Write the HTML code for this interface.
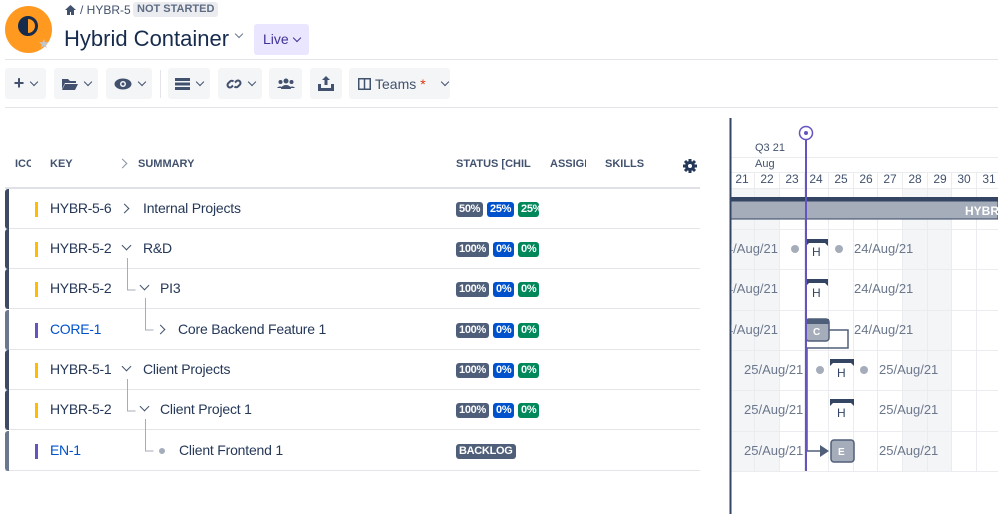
<!DOCTYPE html>
<html><head><style>
*{margin:0;padding:0;box-sizing:border-box}
body{width:998px;height:514px;overflow:hidden;background:#fff;font-family:"Liberation Sans",sans-serif;color:#172b4d;position:relative}
.a{position:absolute}
.btn{position:absolute;top:68px;height:31px;background:#f4f5f7;border-radius:3px;display:flex;align-items:center;justify-content:center;gap:4px;color:#42526e;font-size:14px}
.chev{display:inline-block;width:6px;height:6px;border-right:1.6px solid #42526e;border-bottom:1.6px solid #42526e;transform:rotate(45deg);margin-top:-4px;margin-left:3px}
.hd{position:absolute;top:158px;font-size:11px;font-weight:bold;color:#42526e;overflow:hidden;white-space:nowrap}
.row{position:absolute;left:5px;width:695px;height:40px;border-bottom:1px solid #e4e5e9}
.lb{position:absolute;left:0;top:0;width:4px;height:40px;background:#3e4a63;border-radius:3px 0 0 3px}
.key{position:absolute;left:45px;top:11px;font-size:14px;color:#253858;letter-spacing:-0.3px}
.tick{position:absolute;left:30px;top:13px;width:3px;height:15px;background:#ffbc00}
.sum{position:absolute;top:11px;font-size:14px;color:#253858;letter-spacing:-0.2px}
.pill{position:absolute;top:13px;height:15px;border-radius:3px;color:#fff;font-size:11px;font-weight:bold;line-height:15px;padding:0 3px;letter-spacing:-0.3px}
.g{background:#505f79}.b{background:#0052cc}.gr{background:#00875a}
.ar{position:absolute;width:7px;height:7px;border-right:1.6px solid #42526e;border-bottom:1.6px solid #42526e}
.dt{position:absolute;font-size:13px;color:#6b778c;white-space:nowrap}
.clip{position:absolute;left:731px;width:47px;height:18px;overflow:hidden}
.clip span{position:absolute;right:0;top:0;font-size:13px;color:#6b778c;white-space:nowrap}
.day{position:absolute;top:172px;width:24px;text-align:center;font-size:12px;color:#42526e}
</style></head><body>
<div class="a" style="left:5px;top:6px;width:47px;height:47px;border-radius:50%;background:#ff991f"></div>
<div class="a" style="left:18px;top:16px;width:20px;height:20px;border-radius:50%;border:3px solid #172b4d;background:linear-gradient(90deg,#172b4d 50%,#ff991f 50%)"></div>
<div class="a" style="left:38px;top:36px;font-size:13px;color:#c1c7d0">★</div>
<svg class="a" style="left:64px;top:4px" width="13" height="12" viewBox="0 0 13 12"><path d="M6.5 1L1 6h2v5h3V8h1v3h3V6h2z" fill="#42526e"/></svg>
<div class="a" style="left:80px;top:3px;font-size:12px;color:#42526e">/ HYBR-5</div>
<div class="a" style="left:133px;top:2px;height:15px;padding:0 4px;background:#ebecf0;border-radius:3px;font-size:11px;font-weight:bold;color:#5e6c84;line-height:15px">NOT STARTED</div>
<div class="a" style="left:64px;top:26px;font-size:22px;color:#172b4d">Hybrid Container</div>
<div class="chev a" style="left:233px;top:35px;border-color:#6b778c"></div>
<div class="a" style="left:254px;top:24px;width:55px;height:31px;background:#eae6ff;border-radius:3px;color:#403294;font-size:14px;line-height:31px;padding-left:9px">Live<span class="chev" style="border-color:#403294;margin-left:5px;margin-top:0;vertical-align:3px"></span></div>
<div class="a" style="left:5px;top:59px;width:993px;height:1px;background:#e4e5e9"></div>
<div class="btn" style="left:5px;width:41px"><b style="font-size:18px">+</b><span class="chev"></span></div>
<div class="btn" style="left:54px;width:44px"><svg width="16" height="12"><path d="M0 1h6l2 2h6v2H3L0 11z M3 6h13l-3 6H0z" fill="#42526e"/></svg><span class="chev"></span></div>
<div class="btn" style="left:106px;width:46px"><svg width="18" height="12"><ellipse cx="9" cy="6" rx="8.5" ry="5.5" fill="#42526e"/><circle cx="9" cy="6" r="3" fill="#f4f5f7"/><circle cx="9" cy="6" r="1.5" fill="#42526e"/></svg><span class="chev"></span></div>
<div class="a" style="left:160px;top:70px;width:1px;height:28px;background:#e4e5e9"></div>
<div class="btn" style="left:168px;width:42px"><svg width="15" height="12"><rect y="0" width="15" height="3" fill="#42526e"/><rect y="4.5" width="15" height="3" fill="#42526e"/><rect y="9" width="15" height="3" fill="#42526e"/></svg><span class="chev"></span></div>
<div class="btn" style="left:218px;width:44px"><svg width="16" height="16" viewBox="0 0 16 16"><path d="M7 9.5l-1.5 1.5a2.5 2.5 0 01-3.5-3.5l2-2a2.5 2.5 0 013.5 0M9 6.5l1.5-1.5a2.5 2.5 0 013.5 3.5l-2 2a2.5 2.5 0 01-3.5 0" stroke="#42526e" stroke-width="2" fill="none"/></svg><span class="chev"></span></div>
<div class="btn" style="left:269px;width:33px"><svg width="18" height="12"><circle cx="9" cy="3" r="2.5" fill="#42526e"/><circle cx="3.5" cy="4" r="2" fill="#42526e"/><circle cx="14.5" cy="4" r="2" fill="#42526e"/><path d="M4 11a5 4 0 0110 0z M0 10a3.5 3 0 016 0z M12 10a3.5 3 0 016 0z" fill="#42526e"/></svg></div>
<div class="btn" style="left:310px;width:32px"><svg width="16" height="15"><path d="M8 0l4 4H9.5v5h-3V4H4z M0 8h3v4h10V8h3v7H0z" fill="#42526e"/></svg></div>
<div class="btn" style="left:349px;width:101px;justify-content:flex-start;padding-left:9px"><svg width="13" height="12"><rect x="0.75" y="0.75" width="11.5" height="10.5" fill="none" stroke="#42526e" stroke-width="1.5"/><line x1="6.5" y1="0" x2="6.5" y2="12" stroke="#42526e" stroke-width="1.5"/></svg>Teams <span style="color:#de350b">*</span><span class="chev" style="margin-left:12px"></span></div>
<div class="a" style="left:5px;top:107px;width:993px;height:1px;background:#e4e5e9"></div>
<div class="hd" style="left:15px;width:16px">ICC</div>
<div class="hd" style="left:50px">KEY</div>
<div class="ar" style="left:119px;top:160px;transform:rotate(-45deg);border-color:#8993a4"></div>
<div class="hd" style="left:138px">SUMMARY</div>
<div class="hd" style="left:456px;width:75px">STATUS [CHILD</div>
<div class="hd" style="left:550px;width:36px">ASSIGN</div>
<div class="hd" style="left:605px">SKILLS</div>
<svg class="a" style="left:682px;top:158px" width="16" height="16" viewBox="0 0 16 16"><circle cx="8" cy="8" r="5" fill="#253858"/><g stroke="#253858" stroke-width="3"><line x1="8" y1="1" x2="8" y2="15"/><line x1="1" y1="8" x2="15" y2="8"/><line x1="3" y1="3" x2="13" y2="13"/><line x1="13" y1="3" x2="3" y2="13"/></g><circle cx="8" cy="8" r="2" fill="#fff"/></svg>
<div class="a" style="left:5px;top:187px;width:695px;height:2px;background:#dfe1e6"></div>
<div class="row" style="top:189px"><div class="lb"></div><div class="tick"></div><div class="key">HYBR-5-6</div><div class="ar" style="left:116px;top:16px;transform:rotate(-45deg)"></div><div class="sum" style="left:138px">Internal Projects</div><span class="pill g" style="left:451px">50%</span><span class="pill b" style="left:482px">25%</span><span class="pill gr" style="left:513px;width:21px;overflow:hidden">25%</span></div>
<div class="row" style="top:229px"><div class="lb"></div><div class="tick"></div><div class="key">HYBR-5-2</div><div class="ar" style="left:118px;top:13px;transform:rotate(45deg)"></div><div class="sum" style="left:138px">R&amp;D</div><span class="pill g" style="left:451px">100%</span><span class="pill b" style="left:488px">0%</span><span class="pill gr" style="left:513px">0%</span></div>
<div class="row" style="top:269px"><div class="lb"></div><div class="tick"></div><div class="key">HYBR-5-2</div><div class="ar" style="left:136px;top:13px;transform:rotate(45deg)"></div><div class="sum" style="left:155px">PI3</div><span class="pill g" style="left:451px">100%</span><span class="pill b" style="left:488px">0%</span><span class="pill gr" style="left:513px">0%</span></div>
<div class="row" style="top:310px"><div class="lb" style="background:#6b778c"></div><div class="tick" style="background:#6554c0"></div><div class="key" style="color:#0052cc">CORE-1</div><div class="ar" style="left:152px;top:16px;transform:rotate(-45deg)"></div><div class="sum" style="left:173px">Core Backend Feature 1</div><span class="pill g" style="left:451px">100%</span><span class="pill b" style="left:488px">0%</span><span class="pill gr" style="left:513px">0%</span></div>
<div class="row" style="top:350px"><div class="lb"></div><div class="tick"></div><div class="key">HYBR-5-1</div><div class="ar" style="left:118px;top:13px;transform:rotate(45deg)"></div><div class="sum" style="left:138px">Client Projects</div><span class="pill g" style="left:451px">100%</span><span class="pill b" style="left:488px">0%</span><span class="pill gr" style="left:513px">0%</span></div>
<div class="row" style="top:390px"><div class="lb"></div><div class="tick"></div><div class="key">HYBR-5-2</div><div class="ar" style="left:136px;top:13px;transform:rotate(45deg)"></div><div class="sum" style="left:155px">Client Project 1</div><span class="pill g" style="left:451px">100%</span><span class="pill b" style="left:488px">0%</span><span class="pill gr" style="left:513px">0%</span></div>
<div class="row" style="top:431px"><div class="lb" style="background:#6b778c"></div><div class="tick" style="background:#6554c0"></div><div class="key" style="color:#0052cc">EN-1</div><div class="a" style="left:154px;top:17px;width:6px;height:6px;border-radius:50%;background:#a5adba"></div><div class="sum" style="left:174px">Client Frontend 1</div><span class="pill g" style="left:451px">BACKLOG</span></div>
<svg class="a" style="left:0;top:0" width="200" height="480"><g stroke="#a5adba" stroke-width="1" fill="none"><path d="M127.5 258v32h8"/><path d="M145.5 298v32h8"/><path d="M127.5 379v32h8"/><path d="M145.5 419v32h8"/></g></svg>
<svg class="a" style="left:0;top:0" width="998" height="514">
<g fill="#f4f5f7"><rect x="730" y="188" width="49" height="283"/><rect x="902" y="188" width="49" height="283"/></g>
<g stroke="#ebecf0" stroke-width="1">
<line x1="754.5" y1="172" x2="754.5" y2="471"/><line x1="779.5" y1="172" x2="779.5" y2="471"/><line x1="804.5" y1="172" x2="804.5" y2="471"/><line x1="828.5" y1="172" x2="828.5" y2="471"/><line x1="853.5" y1="172" x2="853.5" y2="471"/><line x1="877.5" y1="172" x2="877.5" y2="471"/><line x1="902.5" y1="172" x2="902.5" y2="471"/><line x1="927.5" y1="172" x2="927.5" y2="471"/><line x1="951.5" y1="172" x2="951.5" y2="471"/><line x1="976.5" y1="172" x2="976.5" y2="471"/>
<line x1="731" y1="157.5" x2="998" y2="157.5"/><line x1="731" y1="172.5" x2="998" y2="172.5"/><line x1="731" y1="188.5" x2="998" y2="188.5"/>
<line x1="731" y1="229.5" x2="998" y2="229.5"/><line x1="731" y1="269.5" x2="998" y2="269.5"/><line x1="731" y1="310.5" x2="998" y2="310.5"/><line x1="731" y1="350.5" x2="998" y2="350.5"/><line x1="731" y1="390.5" x2="998" y2="390.5"/><line x1="731" y1="431.5" x2="998" y2="431.5"/><line x1="731" y1="471.5" x2="998" y2="471.5"/></g>
<rect x="731" y="197" width="267" height="4" fill="#344563"/>
<rect x="731" y="201" width="267" height="18" fill="#a5adba" stroke="#344563" stroke-width="1"/>
<text x="965" y="215" font-size="12" font-weight="bold" fill="#fff" font-family="Liberation Sans">HYBR-</text>
<line x1="730.5" y1="118" x2="730.5" y2="514" stroke="#344563" stroke-width="2"/>
<path d="M826 330h22v18h-41v103h18" stroke="#505f79" stroke-width="1.5" fill="none"/>
<path d="M820 445l9 6-9 6z" fill="#505f79"/>
<g font-family="Liberation Sans" font-size="12" fill="#344563">
<path d="M806 239h22v7l-3-3h-16l-3 3z" fill="#344563"/><text x="812" y="256">H</text>
<path d="M806 279h22v7l-3-3h-16l-3 3z" fill="#344563"/><text x="812" y="297">H</text>
<path d="M830 359h24v7l-3-3h-18l-3 3z" fill="#344563"/><text x="837" y="377">H</text>
<path d="M830 399h24v7l-3-3h-18l-3 3z" fill="#344563"/><text x="837" y="417">H</text>
</g>
<g fill="#a5adba"><circle cx="795" cy="249" r="4"/><circle cx="839" cy="249" r="4"/><circle cx="820" cy="370" r="4"/><circle cx="864" cy="370" r="4"/></g>
<rect x="806" y="319" width="23" height="22" rx="3" fill="#a5adba" stroke="#505f79" stroke-width="1.5"/><rect x="806" y="319" width="23" height="5" fill="#505f79"/>
<text x="813" y="335" font-size="10" font-weight="bold" fill="#fff" font-family="Liberation Sans">C</text>
<rect x="831" y="440" width="23" height="22" rx="3" fill="#a5adba" stroke="#505f79" stroke-width="1.5"/>
<text x="838" y="455" font-size="10" font-weight="bold" fill="#fff" font-family="Liberation Sans">E</text>
<line x1="806" y1="140" x2="806" y2="471" stroke="#6554c0" stroke-width="2"/>
<circle cx="806" cy="133" r="6.5" fill="#fff" stroke="#6554c0" stroke-width="1.5"/><circle cx="806" cy="133" r="2" fill="#6554c0"/>
</svg>
<div class="a" style="left:755px;top:142px;font-size:11px;color:#42526e">Q3 21</div>
<div class="a" style="left:755px;top:158px;font-size:11px;color:#42526e">Aug</div>
<div class="day" style="left:730px">21</div><div class="day" style="left:755px">22</div><div class="day" style="left:780px">23</div><div class="day" style="left:804px">24</div><div class="day" style="left:829px">25</div><div class="day" style="left:854px">26</div><div class="day" style="left:878px">27</div><div class="day" style="left:903px">28</div><div class="day" style="left:928px">29</div><div class="day" style="left:952px">30</div><div class="day" style="left:977px">31</div>
<div class="clip" style="top:241px"><span>24/Aug/21</span></div>
<div class="dt" style="left:854px;top:241px">24/Aug/21</div>
<div class="clip" style="top:281px"><span>24/Aug/21</span></div>
<div class="dt" style="left:854px;top:281px">24/Aug/21</div>
<div class="clip" style="top:322px"><span>24/Aug/21</span></div>
<div class="dt" style="left:854px;top:322px">24/Aug/21</div>
<div class="dt" style="left:744px;top:362px">25/Aug/21</div><div class="dt" style="left:879px;top:362px">25/Aug/21</div>
<div class="dt" style="left:744px;top:402px">25/Aug/21</div><div class="dt" style="left:879px;top:402px">25/Aug/21</div>
<div class="dt" style="left:744px;top:443px">25/Aug/21</div><div class="dt" style="left:879px;top:443px">25/Aug/21</div>
</body></html>
